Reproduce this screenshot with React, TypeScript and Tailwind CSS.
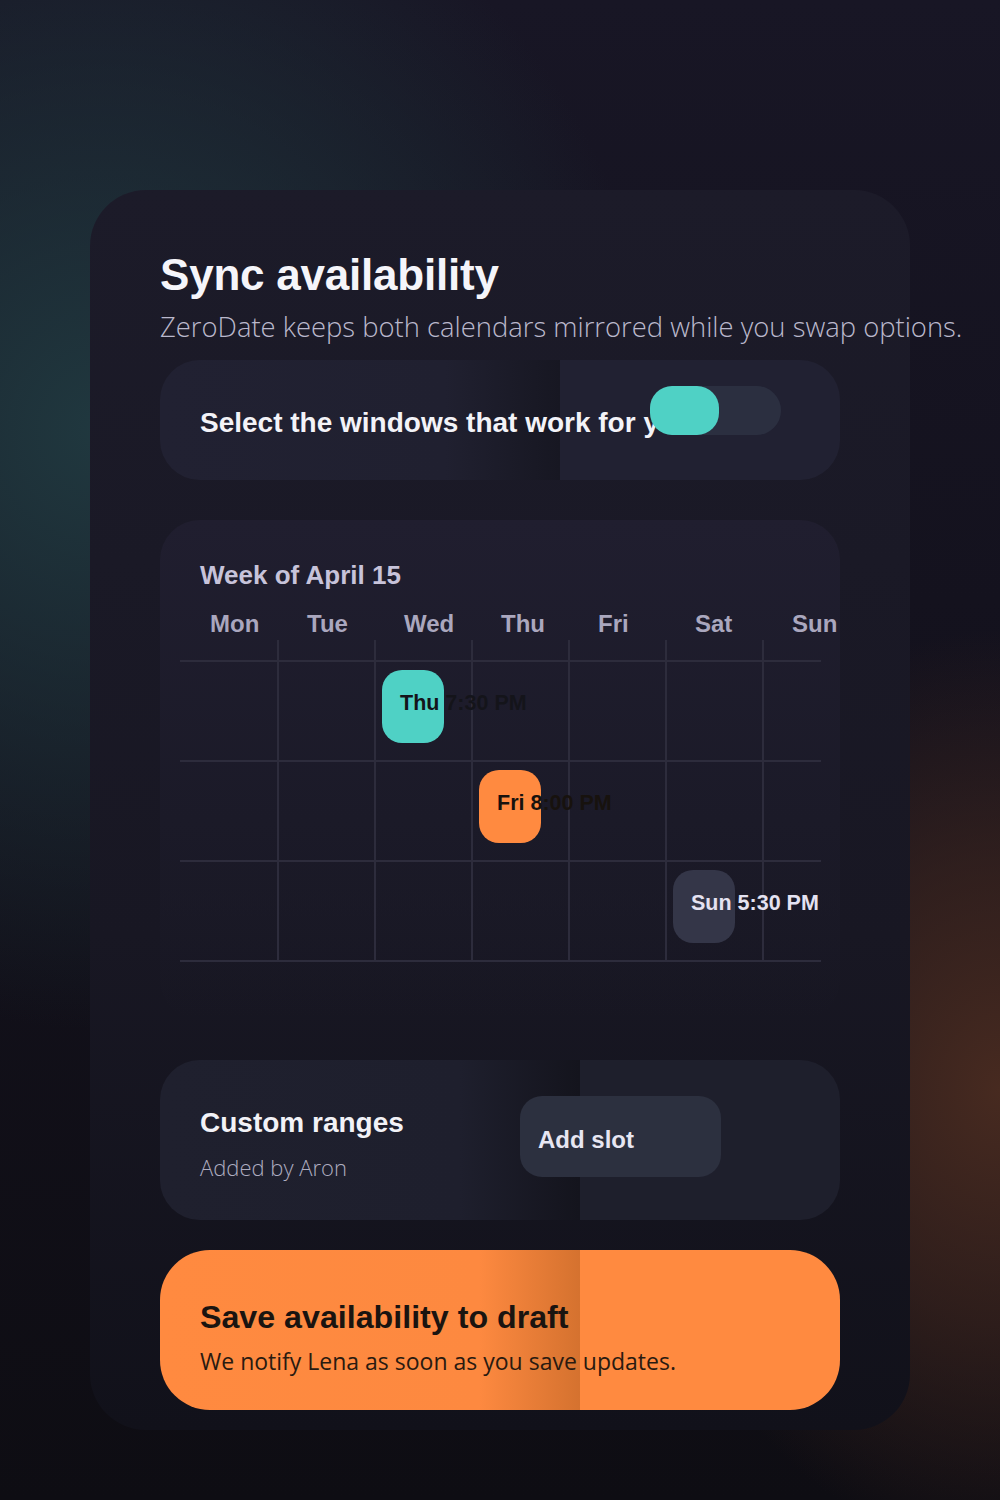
const heading = "font-['Liberation_Sans',Arial,sans-serif] font-bold"
const body = "font-['Open_Sans','Noto_Sans',sans-serif]"

const days = ["Mon", "Tue", "Wed", "Thu", "Fri", "Sat", "Sun"]

const slots = [
  { col: 2, label: "Thu 7:30 PM", chip: "bg-[#4fd1c5] text-[#14141a]" },
  { col: 3, label: "Fri 8:00 PM", chip: "bg-[#ff8a40] text-[#17120e]" },
  { col: 5, label: "Sun 5:30 PM", chip: "bg-[#343648] text-[#e4e2f1]" },
]

function GridRow({ slot, spacer }: { slot?: (typeof slots)[number]; spacer?: boolean }) {
  return (
    <div className={`flex ${spacer ? "h-[20px]" : "h-[100px] border-t-2 border-[#2d2c3c]"}`}>
      {days.map((d, i) => (
        <div key={d} className={`h-full w-[97px] shrink-0 ${i > 0 ? "border-l-2 border-[#2d2c3c]" : ""}`}>
          {slot && slot.col === i && (
            <div className={`relative z-10 ml-[6px] mt-[8px] h-[73px] w-[62px] rounded-[20px] pl-[18px] pt-[23px] whitespace-nowrap text-[21.5px] leading-none ${heading} ${slot.chip}`}>
              {slot.label}
            </div>
          )}
        </div>
      ))}
    </div>
  )
}

export default function App() {
  return (
    <div className="min-h-[1500px] w-full bg-[radial-gradient(ellipse_560px_600px_at_100px_430px,#20383f_0%,rgba(32,56,63,0.55)_45%,transparent_100%),radial-gradient(ellipse_360px_460px_at_1000px_1090px,#472a20_0%,rgba(71,42,32,0.55)_50%,transparent_100%),linear-gradient(180deg,#181625_0%,#14121e_40%,#0e0d13_100%)] pt-[190px]">
      <div className="mx-auto w-[820px] rounded-[56px] bg-[linear-gradient(180deg,#1c1b29_0%,#181723_60%,#11111a_100%)] px-[70px] pb-[20px] pt-[63px]">
        <h1 className={`${heading} text-[44px] leading-none tracking-[-0.005em] text-[#f5f5fa]`}>Sync availability</h1>
        <p className={`${body} mt-[16px] whitespace-nowrap text-[27.4px] leading-none font-light text-[#bab8cc]`}>
          ZeroDate keeps both calendars mirrored while you swap options.
        </p>

        <div className="mt-[20px] flex h-[120px] items-center rounded-[40px] bg-[linear-gradient(90deg,#212132_0%,#202030_42%,#171722_58.8%,#212132_58.8%)] pl-[40px]">
          <span className={`${heading} mt-[6px] w-[410px] shrink-0 whitespace-nowrap text-[28px] leading-none text-[#f3f3f8]`}>
            Select the windows that work for you
          </span>
          <div className="mb-[19px] ml-[40px] flex h-[49px] w-[131px] rounded-full bg-[#2b2f40]">
            <div className="h-[49px] w-[69px] rounded-[22px] bg-[#4fd1c5]" />
          </div>
        </div>

        <div className="mt-[40px] h-[500px] rounded-[40px] bg-[linear-gradient(180deg,#201e2f_0%,#1b1a28_60%,rgba(24,23,35,0)_100%)] px-[20px] pt-[42px]">
          <h2 className={`${heading} ml-[20px] text-[26px] leading-none text-[#c7c3da]`}>Week of April 15</h2>
          <div className="mt-[24px] flex">
            {days.map((d) => (
              <div key={d} className={`${heading} w-[97px] shrink-0 pl-[30px] text-[24px] leading-none text-[#aaa7be]`}>
                {d}
              </div>
            ))}
          </div>
          <div className="mt-[4px] w-[641px] overflow-hidden border-b-2 border-[#2d2c3c]">
            <GridRow spacer />
            {slots.map((s) => (
              <GridRow key={s.label} slot={s} />
            ))}
          </div>
        </div>

        <div className="mt-[40px] flex h-[160px] items-start rounded-[40px] bg-[linear-gradient(90deg,#1f202e_0%,#1e1f2d_44%,#14141d_61.7%,#1e1f2c_61.7%)]">
          <div className="w-[360px] shrink-0 pl-[40px] pt-[49px]">
            <div className={`${heading} text-[28px] leading-none text-[#f2f2f7]`}>Custom ranges</div>
            <div className={`${body} mt-[19px] text-[22px] leading-none font-light text-[#aeadc0]`}>Added by Aron</div>
          </div>
          <button className={`${heading} mt-[36px] h-[81px] w-[201px] rounded-[22px] bg-[#2c303f] pl-[18px] pt-[6px] text-left text-[24px] text-[#e7e6f2]`}>
            Add slot
          </button>
        </div>

        <div className="mt-[30px] h-[160px] rounded-[50px] bg-[linear-gradient(90deg,#ff8a40_0%,#fd8940_47%,#d5722f_61.7%,#ff8a40_61.7%)] pl-[40px] pt-[51px]">
          <div className={`${heading} text-[32.2px] leading-none text-[#1a1410]`}>Save availability to draft</div>
          <div className={`${body} mt-[16px] text-[23px] leading-none text-[#2a1a10]`}>We notify Lena as soon as you save updates.</div>
        </div>
      </div>
    </div>
  )
}
